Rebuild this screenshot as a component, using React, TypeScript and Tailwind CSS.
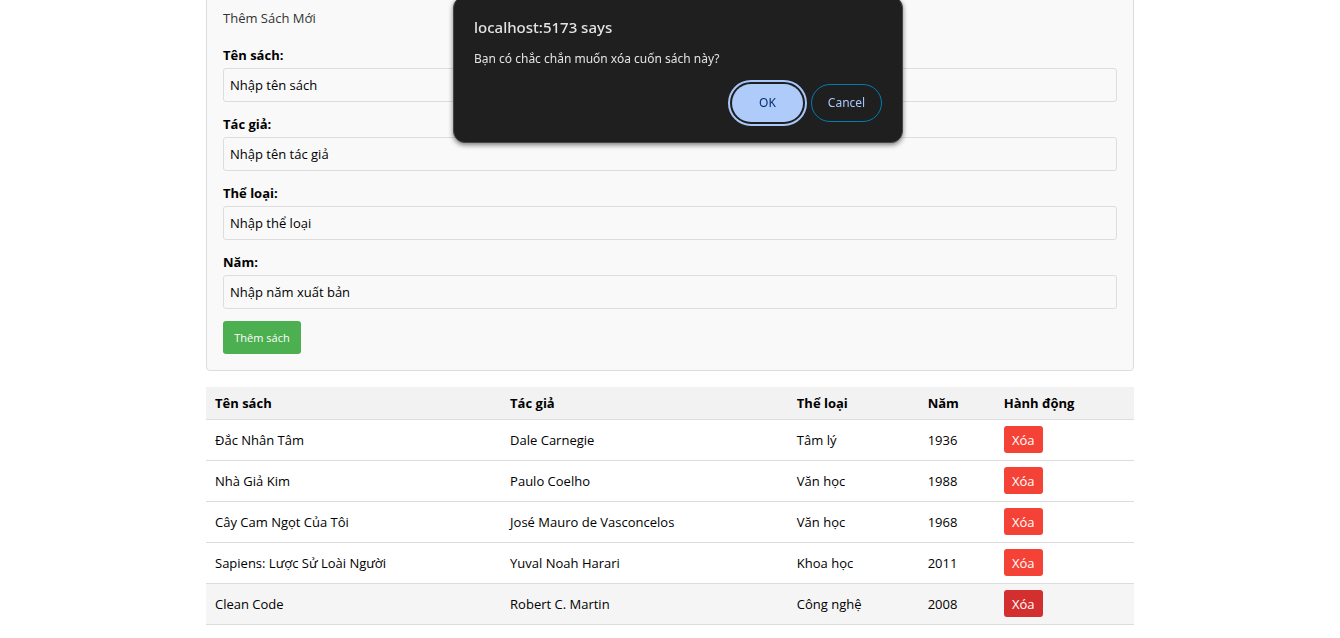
const fields = [
  { id: "title", label: "Tên sách:", placeholder: "Nhập tên sách" },
  { id: "author", label: "Tác giả:", placeholder: "Nhập tên tác giả" },
  { id: "genre", label: "Thể loại:", placeholder: "Nhập thể loại" },
  { id: "year", label: "Năm:", placeholder: "Nhập năm xuất bản" },
];

const books = [
  { title: "Đắc Nhân Tâm", author: "Dale Carnegie", genre: "Tâm lý", year: 1936 },
  { title: "Nhà Giả Kim", author: "Paulo Coelho", genre: "Văn học", year: 1988 },
  { title: "Cây Cam Ngọt Của Tôi", author: "José Mauro de Vasconcelos", genre: "Văn học", year: 1968 },
  { title: "Sapiens: Lược Sử Loài Người", author: "Yuval Noah Harari", genre: "Khoa học", year: 2011 },
  { title: "Clean Code", author: "Robert C. Martin", genre: "Công nghệ", year: 2008 },
];

const selectedTitle = "Clean Code";

function BookForm() {
  return (
    <form className="-mt-[9px] rounded-[4px] border border-[#dddddd] bg-[#f9f9f9] p-4" onSubmit={(e) => e.preventDefault()}>
      <h2 className="mb-[17px] text-[13px] leading-5 text-[#333333]">Thêm Sách Mới</h2>
      {fields.map((field) => (
        <div key={field.id} className="mb-3">
          <label htmlFor={field.id} className="mb-[3px] block leading-5 font-bold">
            {field.label}
          </label>
          <input
            id={field.id}
            type="text"
            placeholder={field.placeholder}
            className="block h-[34px] w-full rounded-[3px] border border-[#dddddd] bg-transparent px-1.5 placeholder:text-black"
          />
        </div>
      ))}
      <button type="submit" className="block h-[33px] w-[78px] rounded-[3px] bg-[#4caf50] text-[11px] text-white">
        Thêm sách
      </button>
    </form>
  );
}

function BookTable() {
  return (
    <table className="mt-4 w-full table-fixed border-collapse text-left">
      <colgroup>
        <col className="w-[31.8%]" />
        <col className="w-[30.9%]" />
        <col className="w-[14.1%]" />
        <col className="w-[8.2%]" />
        <col />
      </colgroup>
      <thead>
        <tr className="h-8 border-b border-[#dddddd] bg-[#f2f2f2]">
          <th className="px-[9px]">Tên sách</th>
          <th className="px-[9px]">Tác giả</th>
          <th className="px-[9px]">Thể loại</th>
          <th className="px-[9px]">Năm</th>
          <th className="px-[9px]">Hành động</th>
        </tr>
      </thead>
      <tbody>
        {books.map((book) => {
          const selected = book.title === selectedTitle;
          return (
            <tr key={book.title} className={selected ? "h-[41px] border-b border-[#dddddd] bg-[#f5f5f5]" : "h-[41px] border-b border-[#dddddd]"}>
              <td className="px-[9px]">{book.title}</td>
              <td className="px-[9px]">{book.author}</td>
              <td className="px-[9px]">{book.genre}</td>
              <td className="px-[9px]">{book.year}</td>
              <td className="px-[9px]">
                <button
                  type="button"
                  className={
                    selected
                      ? "block h-[27px] w-[39px] rounded-[3px] bg-[#d32f2f] text-white"
                      : "block h-[27px] w-[39px] rounded-[3px] bg-[#f44336] text-white"
                  }
                >
                  Xóa
                </button>
              </td>
            </tr>
          );
        })}
      </tbody>
    </table>
  );
}

function ConfirmDialog() {
  return (
    <div
      role="alertdialog"
      aria-labelledby="confirm-title"
      aria-describedby="confirm-text"
      className="fixed -top-1 left-[calc(50%+8px)] w-[450px] max-w-full -translate-x-1/2 rounded-xl border border-[#474747] bg-[#1f1f1f] px-5 pt-[18px] pb-5 font-['Noto_Sans','Open_Sans',sans-serif] text-[#e3e3e3] shadow-[0_2px_5px_rgba(0,0,0,0.5)]"
    >
      <h1 id="confirm-title" className="text-[15px] leading-6 font-medium">localhost:5173 says</h1>
      <p id="confirm-text" className="mt-2.5 text-[12px] leading-5">Bạn có chắc chắn muốn xóa cuốn sách này?</p>
      <div className="mt-[15px] flex justify-end gap-2">
        <button
          type="button"
          className="h-[38px] w-[71px] rounded-full bg-[#aecbfa] text-[12px] text-[#062e6f] outline-2 outline-offset-2 outline-[#a8c7fa]"
        >
          OK
        </button>
        <button type="button" className="h-[38px] w-[71px] rounded-full border border-[#007db3] text-[12px] text-[#a8c7fa]">
          Cancel
        </button>
      </div>
    </div>
  );
}

export default function App() {
  return (
    <div className="flow-root min-h-screen bg-white font-['Open_Sans','Noto_Sans',sans-serif] text-[13px] leading-5 text-black">
      <main className="mx-auto max-w-[928px] pb-3">
        <BookForm />
        <BookTable />
      </main>
      <ConfirmDialog />
    </div>
  );
}
